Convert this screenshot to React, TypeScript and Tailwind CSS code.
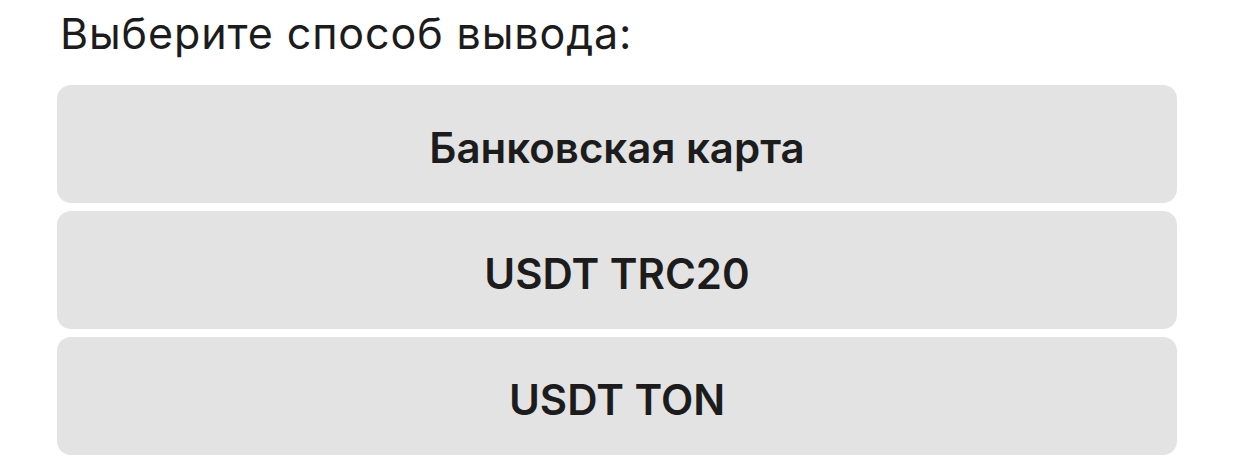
const methods = ["Банковская карта", "USDT TRC20", "USDT TON"];

export default function App() {
  return (
    <div className="min-h-screen bg-white font-['Inter',sans-serif] pl-[57px] pr-[58px] pt-[12px]">
      <h2 className="text-[43px] leading-[43px] tracking-[0.9px] text-[#1c1c1c] pl-[3px]">Выберите способ вывода:</h2>
      <div className="mt-[30px] flex flex-col gap-2">
        {methods.map((m) => (
          <button
            key={m}
            className="h-[118px] w-full rounded-[14px] bg-[#e3e3e3] pt-[6px] text-[42px] font-semibold text-[#1c1c1c]"
          >
            {m}
          </button>
        ))}
      </div>
    </div>
  );
}
